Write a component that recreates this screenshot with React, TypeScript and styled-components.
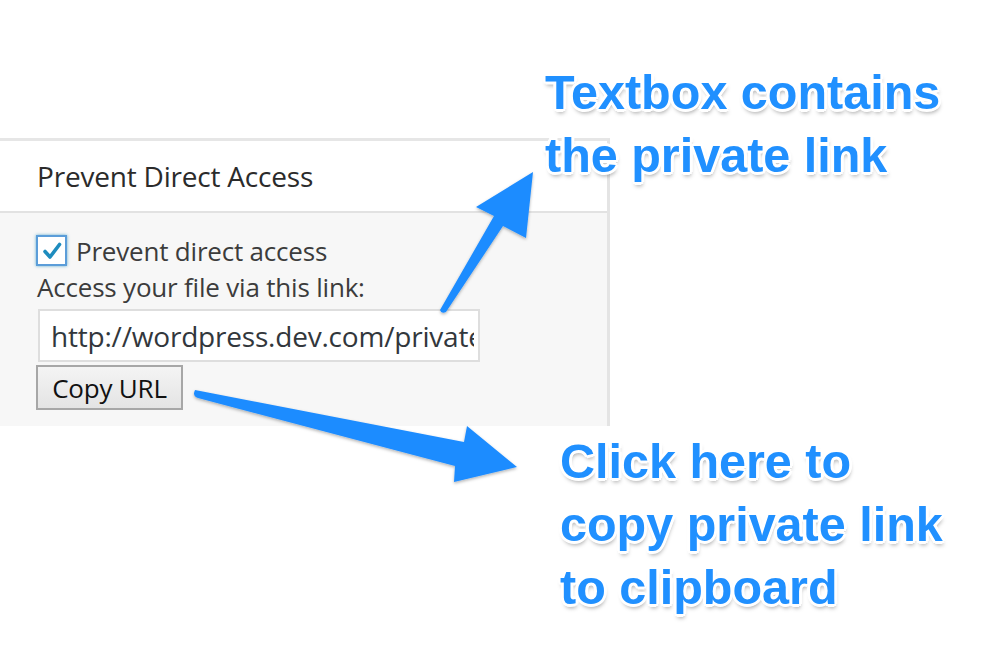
import React from 'react'
import styled, { createGlobalStyle } from 'styled-components'

const GlobalStyle = createGlobalStyle`
  html, body {
    margin: 0;
    padding: 0;
    background: #fff;
  }
  body {
    font-family: "Open Sans", "Noto Sans", sans-serif;
  }
`;

const Page = styled.div`
  position: relative;
  width: 1000px;
  height: 672px;
  overflow: hidden;
  background: #fff;
`;

const Panel = styled.section`
  width: 607px;
  margin-top: 138px;
  border-top: 3px solid #e6e6e6;
  border-right: 3px solid #e4e4e4;
`;

const PanelHeader = styled.h2`
  margin: 0;
  height: 70px;
  padding-left: 37px;
  display: flex;
  align-items: center;
  background: #fff;
  border-bottom: 2px solid #e2e2e2;
  font-size: 28px;
  font-weight: 400;
  letter-spacing: -0.2px;
  color: #2b2b2b;
`;

const PanelBody = styled.div`
  background: #f7f7f7;
  padding: 22px 0 16px 36px;
  display: flex;
  flex-direction: column;
  align-items: flex-start;
  color: #3c3c3c;
  font-size: 26px;
  letter-spacing: -0.2px;
`;

const CheckRow = styled.label`
  display: flex;
  align-items: center;
  gap: 9px;
  line-height: 30px;
`;

const Box = styled.span`
  width: 27px;
  height: 27px;
  border: 2px solid #5b9dd9;
  box-shadow: 0 0 3px rgba(30, 140, 190, 0.7);
  background: #fff;
  display: flex;
  align-items: center;
  justify-content: center;
`;

const Check = styled.svg`
  width: 24px;
  height: 24px;
  fill: none;
  stroke: #1e8cbe;
  stroke-width: 3.6px;
  stroke-linecap: round;
  stroke-linejoin: round;
`;

const Hint = styled.p`
  margin: 6px 0 0 1px;
  line-height: 30px;
`;

const LinkField = styled.input`
  margin: 7px 0 0 2px;
  width: 442px;
  height: 53px;
  box-sizing: border-box;
  border: 2px solid #dedede;
  background: #fff;
  padding: 0 4px 0 11px;
  font-family: "Open Sans", "Noto Sans", sans-serif;
  font-size: 28px;
  letter-spacing: -0.2px;
  color: #32373c;
  outline: none;
`;

const CopyButton = styled.button`
  margin-top: 3px;
  width: 147px;
  height: 45px;
  border: 2px solid #a7a7a7;
  background: linear-gradient(#f4f4f4, #e4e4e4);
  font-family: "Open Sans", "Noto Sans", sans-serif;
  font-size: 26px;
  letter-spacing: -0.2px;
  color: #111;
  padding: 0;
`;

const Callout = styled.div<{ $left: number; $top: number }>`
  position: absolute;
  left: ${p => p.$left}px;
  top: ${p => p.$top}px;
  font-family: "Liberation Sans", Arial, sans-serif;
  font-weight: 700;
  font-size: 48.5px;
  line-height: 63px;
  color: #2090ff;
  text-shadow:
    -2px -2px 0 #fff, 2px -2px 0 #fff, -2px 2px 0 #fff, 2px 2px 0 #fff,
    0 -3px 0 #fff, 0 3px 0 #fff, -3px 0 0 #fff, 3px 0 0 #fff,
    1px 4px 4px rgba(0, 0, 0, 0.35);
  white-space: nowrap;
`;

const Arrows = styled.svg`
  position: absolute;
  left: 0;
  top: 0;
  width: 1000px;
  height: 672px;
  pointer-events: none;
`;

const App: React.FC = () => (
  <Page>
    <GlobalStyle />
    <Panel>
      <PanelHeader>Prevent Direct Access</PanelHeader>
      <PanelBody>
        <CheckRow>
          <Box>
            <Check viewBox="0 0 24 24">
              <polyline points="5 12.5 10 18 19.5 5.5" />
            </Check>
          </Box>
          Prevent direct access
        </CheckRow>
        <Hint>Access your file via this link:</Hint>
        <LinkField readOnly value="http://wordpress.dev.com/private/3f9a1c2b" />
        <CopyButton>Copy URL</CopyButton>
      </PanelBody>
    </Panel>

    <Callout $left={545} $top={61}>
      Textbox contains
      <br />
      the private link
    </Callout>
    <Callout $left={560} $top={430}>
      Click here to
      <br />
      copy private link
      <br />
      to clipboard
    </Callout>

    <Arrows viewBox="0 0 1000 672">
      <defs>
        <filter id="sh" x="-20%" y="-20%" width="140%" height="140%">
          <feDropShadow dx="0" dy="1.5" stdDeviation="1.5" floodColor="#000" floodOpacity="0.3" />
        </filter>
      </defs>
      <g fill="#1e8cff" filter="url(#sh)">
        <path d="M440 310 Q441 314 446 312 L503 226 L526 238 L533 172 L476 207 L494 216 Z" />
        <path d="M195 390 Q192 396 198 398 L455 466 L454 482 L517 467 L467 426 L464 442 Z" />
      </g>
    </Arrows>
  </Page>
)

export default App
